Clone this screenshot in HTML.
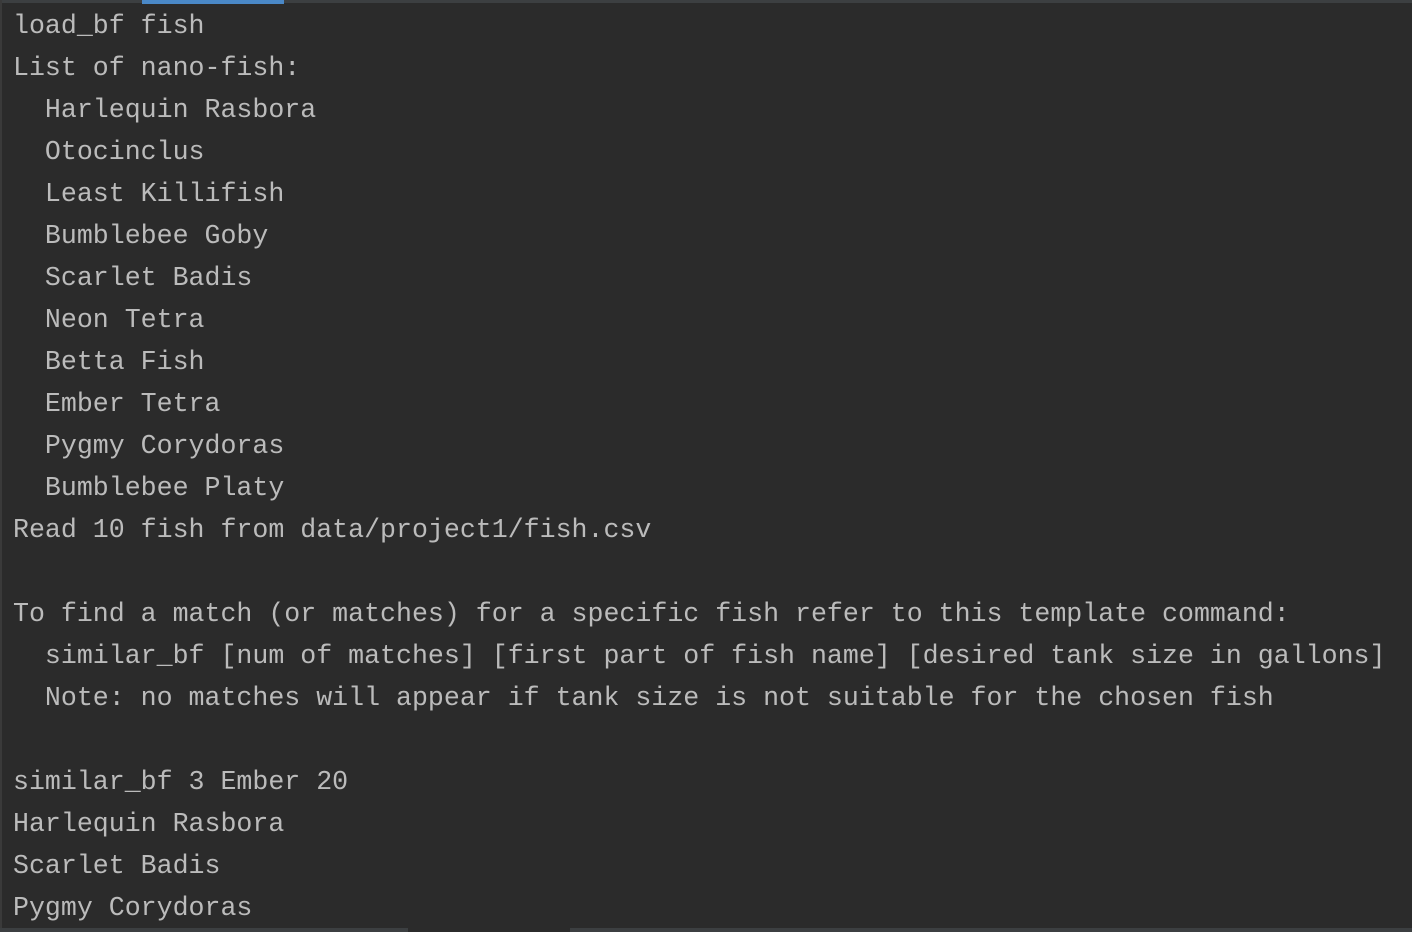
<!DOCTYPE html>
<html><head><style>
html,body{margin:0;padding:0;}
body{width:1412px;height:932px;background:#2b2b2b;position:relative;overflow:hidden;}
.top{position:absolute;left:0;top:0;width:1412px;height:3px;background:#3c3f41;}
.blue{position:absolute;left:142px;top:0;width:142px;height:4px;background:#4a88c7;}
.left{position:absolute;left:0;top:0;width:2px;height:932px;background:#3a3a3a;}
.bot{position:absolute;left:0;top:928px;width:1412px;height:4px;background:#3c3f41;}
.botd{position:absolute;left:408px;top:928px;width:162px;height:4px;background:#2b2b2b;}
pre{position:absolute;left:13px;top:5px;margin:0;font-family:"Liberation Mono",monospace;font-size:26.6px;line-height:42px;color:#bbbbbb;}
</style></head><body>
<div class="top"></div><div class="blue"></div><div class="left"></div>
<pre>load_bf fish
List of nano-fish:
  Harlequin Rasbora
  Otocinclus
  Least Killifish
  Bumblebee Goby
  Scarlet Badis
  Neon Tetra
  Betta Fish
  Ember Tetra
  Pygmy Corydoras
  Bumblebee Platy
Read 10 fish from data/project1/fish.csv

To find a match (or matches) for a specific fish refer to this template command:
  similar_bf [num of matches] [first part of fish name] [desired tank size in gallons]
  Note: no matches will appear if tank size is not suitable for the chosen fish

similar_bf 3 Ember 20
Harlequin Rasbora
Scarlet Badis
Pygmy Corydoras</pre>
<div class="bot"></div><div class="botd"></div>
</body></html>
